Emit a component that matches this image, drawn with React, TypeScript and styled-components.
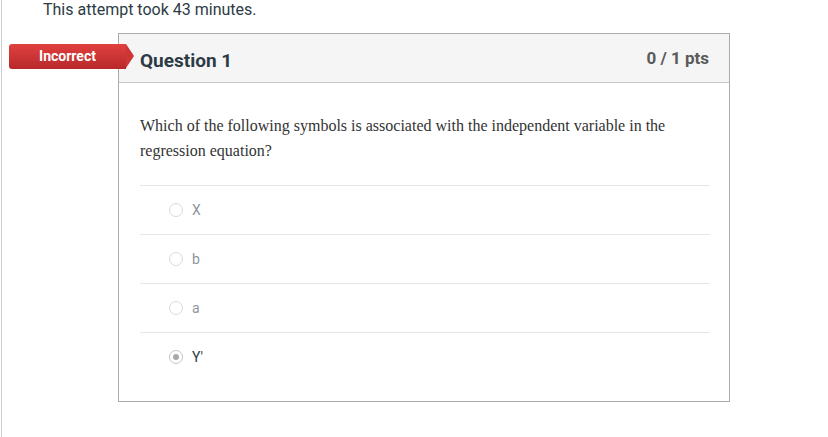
import React from "react";
import styled, { createGlobalStyle } from "styled-components";

interface Answer {
  id: number;
  label: string;
  selected: boolean;
}

const answers: Answer[] = [
  { id: 1, label: "X", selected: false },
  { id: 2, label: "b", selected: false },
  { id: 3, label: "a", selected: false },
  { id: 4, label: "Y'", selected: true },
];

const App = () => {
  return (
    <Page>
      <GlobalStyle />
      <Attempt>This attempt took 43 minutes.</Attempt>
      <Card>
        <Badge>Incorrect</Badge>
        <CardHeader>
          <QuestionTitle>Question 1</QuestionTitle>
          <Points>0 / 1 pts</Points>
        </CardHeader>
        <CardBody>
          <QuestionText>
            Which of the following symbols is associated with the independent
            variable in the regression equation?
          </QuestionText>
          <AnswerList>
            {answers.map((a) => (
              <AnswerRow key={a.id}>
                <Radio $selected={a.selected} />
                <AnswerLabel $selected={a.selected}>{a.label}</AnswerLabel>
              </AnswerRow>
            ))}
          </AnswerList>
        </CardBody>
      </Card>
    </Page>
  );
};

const GlobalStyle = createGlobalStyle`
  body {
    margin: 0;
    background: #fff;
    font-family: Roboto, "Liberation Sans", sans-serif;
  }
`;

const Page = styled.div`
  margin-left: 1px;
  border-left: 1px solid #cfcfcf;
  min-height: 437px;
  box-sizing: border-box;
  padding-top: 0;
`;

const Attempt = styled.div`
  margin-left: 41px;
  font-size: 16px;
  line-height: 19px;
  color: #2d3b45;
`;

const Card = styled.div`
  position: relative;
  margin: 14px 0 0 116px;
  width: 612px;
  box-sizing: border-box;
  border: 1px solid #ababab;
`;

const Badge = styled.div`
  position: absolute;
  left: -110px;
  top: 10px;
  width: 117px;
  height: 25px;
  background: linear-gradient(#e0413f, #b8282b);
  border-radius: 3px 0 0 3px;
  color: #fff;
  font-weight: bold;
  font-size: 14px;
  line-height: 25px;
  text-align: center;
  &::after {
    content: "";
    position: absolute;
    right: -8px;
    top: 0;
    border-top: 12.5px solid transparent;
    border-bottom: 12.5px solid transparent;
    border-left: 8px solid #cd3536;
  }
`;

const CardHeader = styled.div`
  display: flex;
  align-items: center;
  justify-content: space-between;
  height: 48px;
  padding: 0 20px 0 21px;
  background: #f5f5f5;
  border-bottom: 1px solid #c7c7c7;
`;

const QuestionTitle = styled.div`
  font-size: 19px;
  font-weight: bold;
  color: #2d3b45;
  margin-top: 4px;
`;

const Points = styled.div`
  font-size: 17px;
  font-weight: bold;
  color: #5b5b5b;
`;

const CardBody = styled.div`
  padding: 30px 19px 20px 21px;
`;

const QuestionText = styled.div`
  font-family: "Liberation Serif", "Times New Roman", serif;
  font-size: 16px;
  line-height: 25px;
  color: #333;
  padding-right: 30px;
  margin-bottom: 22px;
`;

const AnswerList = styled.div`
  display: flex;
  flex-direction: column;
`;

const AnswerRow = styled.div`
  display: flex;
  align-items: center;
  height: 48px;
  padding-left: 29px;
  border-top: 1px solid #e6e6e6;
`;

const Radio = styled.span<{ $selected: boolean }>`
  width: 14px;
  height: 14px;
  box-sizing: border-box;
  border-radius: 50%;
  border: 1.5px solid ${(p) => (p.$selected ? "#c4c4c4" : "#dadada")};
  display: flex;
  align-items: center;
  justify-content: center;
  margin-right: 9px;
  &::after {
    content: "";
    display: ${(p) => (p.$selected ? "block" : "none")};
    width: 6px;
    height: 6px;
    border-radius: 50%;
    background: #a8a8a8;
  }
`;

const AnswerLabel = styled.span<{ $selected: boolean }>`
  font-size: 14px;
  color: ${(p) => (p.$selected ? "#2d3b45" : "#8b959d")};
`;

export default App;
